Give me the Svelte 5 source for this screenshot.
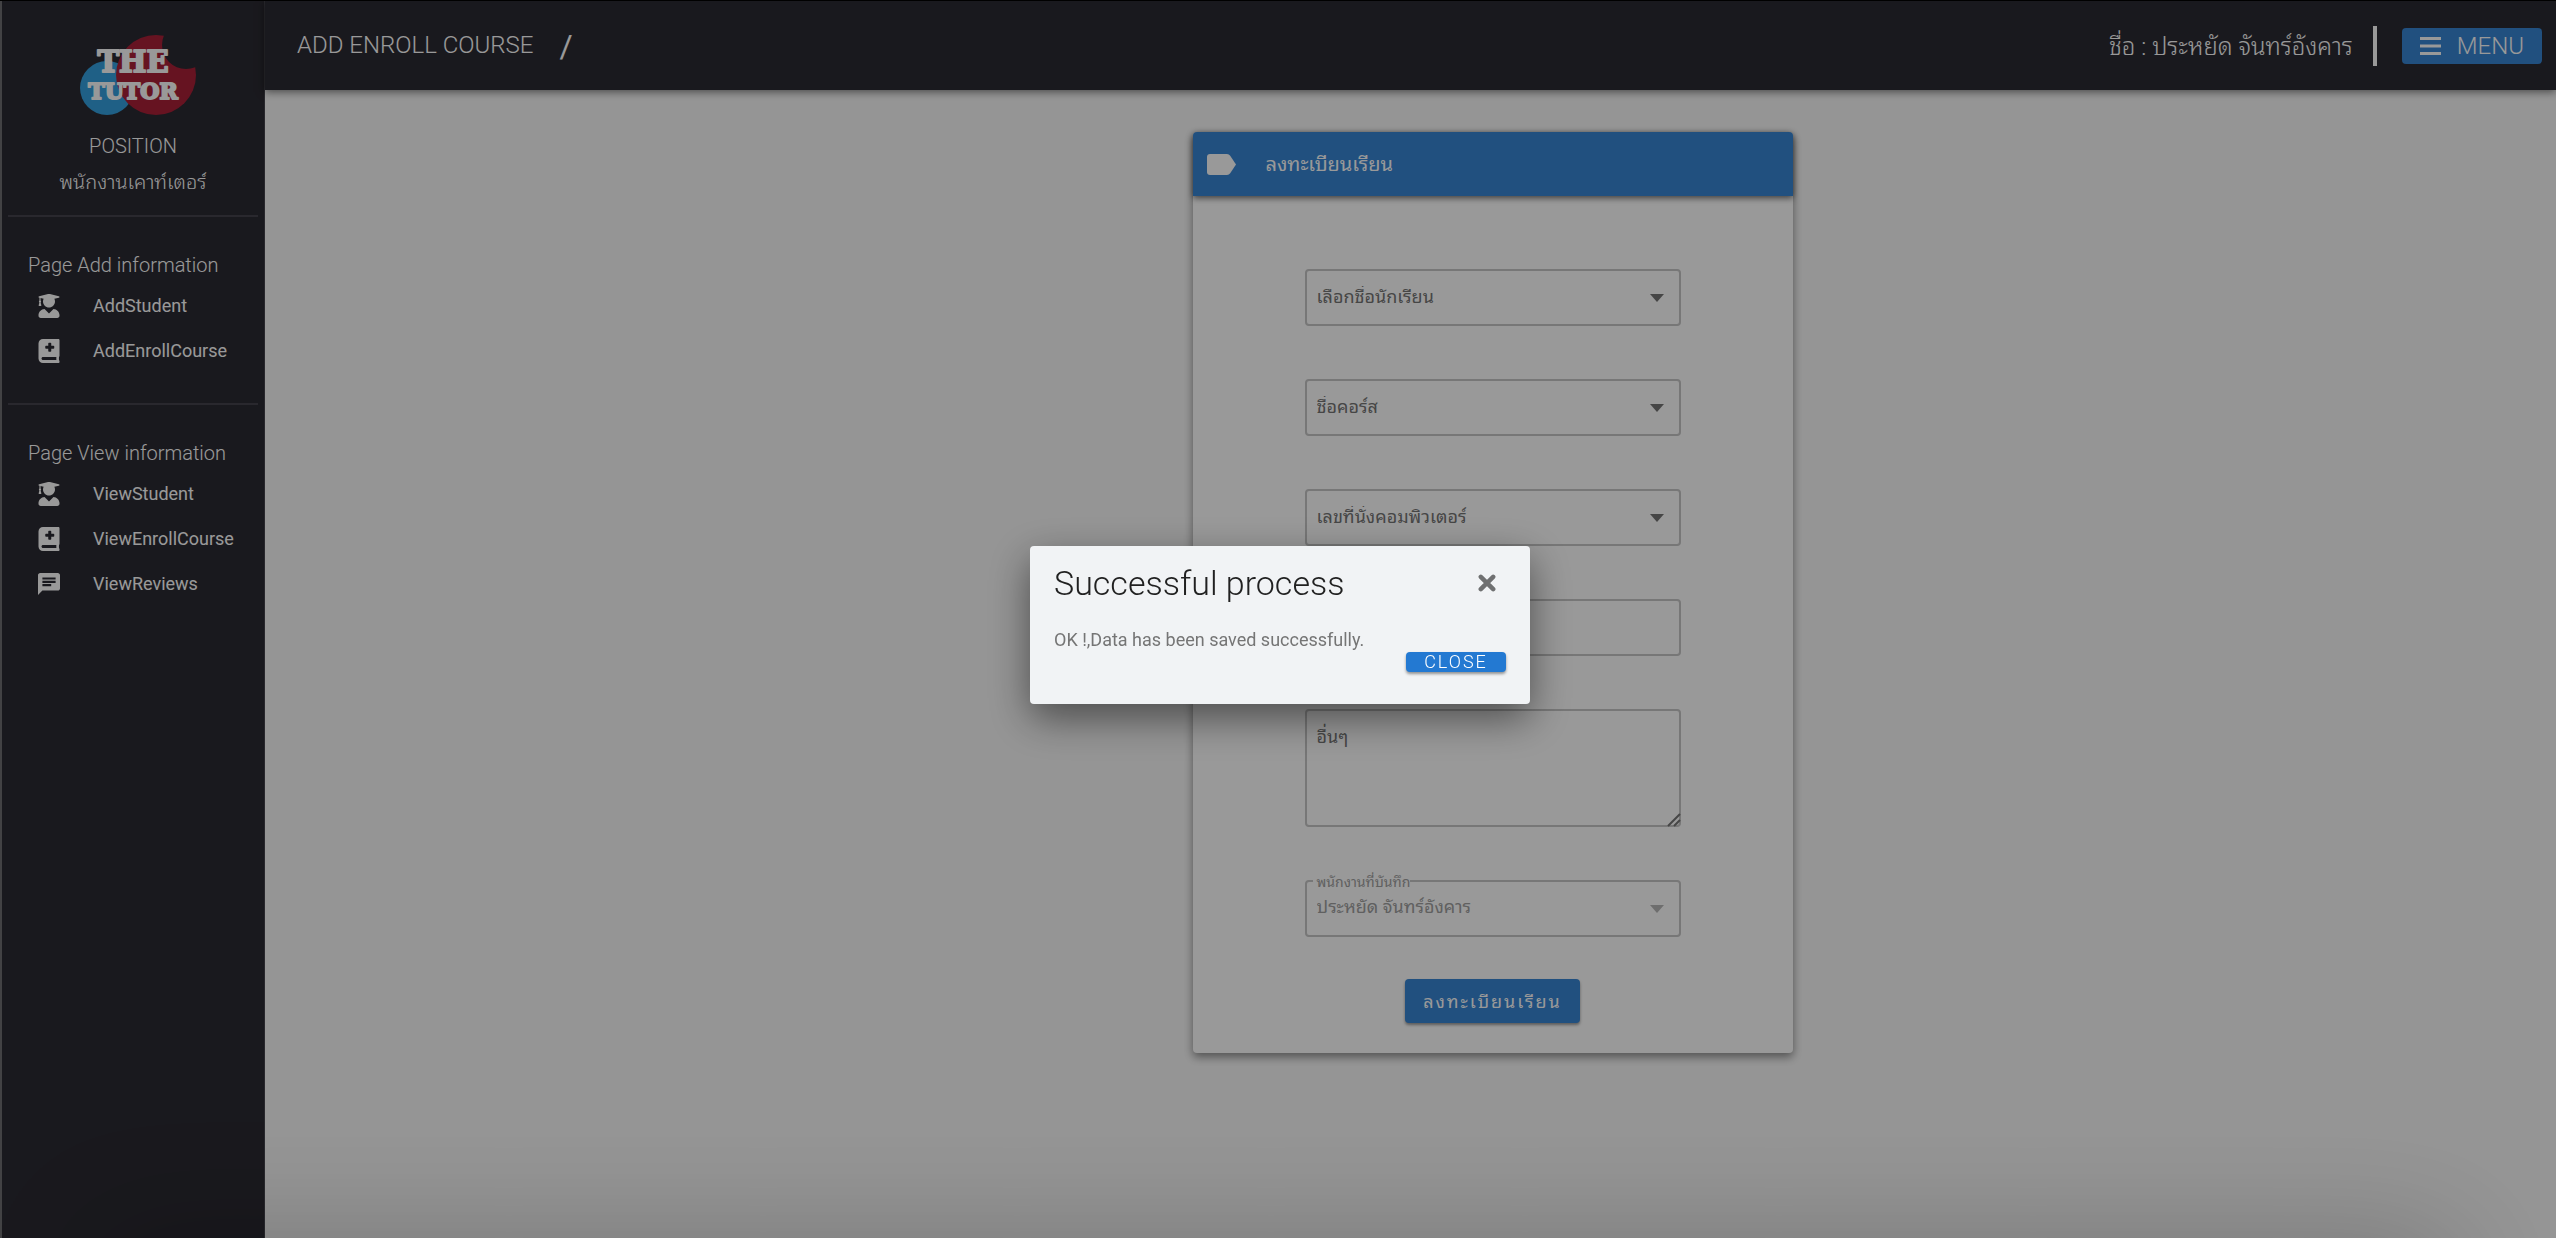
<script>
  const groups = [
    {
      title: 'Page Add information',
      items: [
        { label: 'AddStudent', icon: 'student' },
        { label: 'AddEnrollCourse', icon: 'book' }
      ]
    },
    {
      title: 'Page View information',
      items: [
        { label: 'ViewStudent', icon: 'student' },
        { label: 'ViewEnrollCourse', icon: 'book' },
        { label: 'ViewReviews', icon: 'chat' }
      ]
    }
  ];

  const selects = [
    { id: 'student', label: 'เลือกชื่อนักเรียน' },
    { id: 'course', label: 'ชื่อคอร์ส' },
    { id: 'seat', label: 'เลขที่นั่งคอมพิวเตอร์' }
  ];
</script>

<div class="app">
  <aside class="sidebar">
    <div class="profile">
      <svg class="logo" viewBox="0 0 116 80" role="img" aria-label="The Tutor">
        <defs>
          <mask id="bite">
            <rect width="116" height="80" fill="#fff" />
            <circle cx="106" cy="10" r="24" fill="#000" />
          </mask>
        </defs>
        <circle cx="27" cy="53" r="27" fill="#34a0df" />
        <circle cx="76" cy="40" r="40" fill="#aa2038" mask="url(#bite)" />
        <text x="53" y="37" text-anchor="middle" class="logo-top">THE</text>
        <text x="53" y="64" text-anchor="middle" class="logo-bottom">TUTOR</text>
      </svg>
      <div class="position">POSITION</div>
      <div class="role">พนักงานเคาท์เตอร์</div>
    </div>

    {#each groups as group}
      <nav class="group" aria-label={group.title}>
        <h2>{group.title}</h2>
        <ul>
          {#each group.items as item}
            <li>
              <a href="#{item.label}">
                {#if item.icon === 'student'}
                  <svg class="icon" viewBox="0 0 448 512" aria-hidden="true">
                    <path d="M319.4 320.6L224 416l-95.400-95.400C57.100 323.700 0 382.200 0 454.400v9.600c0 26.500 21.500 48 48 48h352c26.500 0 48-21.500 48-48v-9.600c0-72.200-57.100-130.700-128.600-133.800zM13.600 79.800l6.400 1.500v58.400c-7 4.200-12 11.500-12 20.300 0 8.400 4.600 15.400 11.100 19.700L3.500 242c-1.700 6.900 2.100 14 7.600 14h41.800c5.500 0 9.300-7.100 7.600-14l-15.600-62.300C51.400 175.400 56 168.400 56 160c0-8.800-5-16.100-12-20.300V87.100l66 15.900c-8.600 17.200-14 36.400-14 57 0 70.700 57.300 128 128 128s128-57.300 128-128c0-20.600-5.300-39.800-14-57l96.300-23.200c18.200-4.400 18.200-27.100 0-31.500l-190.400-46c-13-3.100-26.700-3.100-39.700 0L13.600 48.200c-18.100 4.400-18.100 27.200 0 31.600z" />
                  </svg>
                {:else if item.icon === 'book'}
                  <svg class="icon" viewBox="0 0 448 512" aria-hidden="true">
                    <path fill-rule="evenodd" d="M448 360V24c0-13.300-10.700-24-24-24H96C43 0 0 43 0 96v320c0 53 43 96 96 96h328c13.300 0 24-10.700 24-24v-16c0-7.500-3.500-14.300-8.900-18.700-4.200-15.400-4.200-59.300 0-74.700 5.400-4.300 8.900-11.100 8.900-18.600zM144 160q0-16 16-16h48V96q0-16 16-16h32q16 0 16 16v48h48q16 0 16 16v32q0 16-16 16h-48v48q0 16-16 16h-32q-16 0-16-16v-48h-48q-16 0-16-16zM381.400 448H96c-17.700 0-32-14.300-32-32s14.300-32 32-32h285.400c-1.900 17.100-1.900 46.900 0 64z" />
                  </svg>
                {:else}
                  <svg class="icon" viewBox="2 2 20 20" aria-hidden="true">
                    <path d="M20 2H4c-1.100 0-1.990.9-1.990 2L2 22l4-4h14c1.100 0 2-.9 2-2V4c0-1.100-.9-2-2-2zM6 9h12v2H6V9zm8 5H6v-2h8v2zm4-6H6V6h12v2z" />
                  </svg>
                {/if}
                <span>{item.label}</span>
              </a>
            </li>
          {/each}
        </ul>
      </nav>
    {/each}
  </aside>

  <div class="main">
    <header class="topbar">
      <h1>ADD ENROLL COURSE</h1>
      <span class="slash">/</span>
      <span class="user">ชื่อ : ประหยัด จันทร์อังคาร</span>
      <span class="bar"></span>
      <button class="menu" type="button">
        <svg viewBox="0 0 21 18" aria-hidden="true">
          <path d="M0 0h21v3H0zM0 7.500h21v3H0zM0 15h21v3H0z" />
        </svg>
        MENU
      </button>
    </header>

    <main>
      <form class="card">
        <div class="card-head">
          <svg viewBox="0 0 29 21" aria-hidden="true">
            <path d="M3 0H20Q22 0 23.200 1.700L29 10.500L23.200 19.300Q22 21 20 21H3Q0 21 0 18V3Q0 0 3 0Z" />
          </svg>
          <span>ลงทะเบียนเรียน</span>
        </div>
        <div class="fields">
          {#each selects as field}
            <div class="field">
              <select id={field.id} aria-label={field.label}>
                <option>{field.label}</option>
              </select>
              <svg class="caret" viewBox="0 0 14 8" aria-hidden="true"><path d="M0 0h14L7 8z" /></svg>
            </div>
          {/each}
          <div class="field">
            <input type="text" aria-label="จำนวน" />
          </div>
          <div class="field">
            <textarea aria-label="อื่นๆ" placeholder="อื่นๆ"></textarea>
            <svg class="grip" viewBox="0 0 14 14" aria-hidden="true"><path d="M1 13L13 1M7 13L13 7" /></svg>
          </div>
          <div class="field disabled">
            <label for="staff">พนักงานที่บันทึก</label>
            <select id="staff" disabled>
              <option>ประหยัด จันทร์อังคาร</option>
            </select>
            <svg class="caret" viewBox="0 0 14 8" aria-hidden="true"><path d="M0 0h14L7 8z" /></svg>
          </div>
        </div>
        <button class="submit" type="button">ลงทะเบียนเรียน</button>
      </form>
    </main>
  </div>
</div>

<div class="scrim">
  <div class="dialog" role="dialog" aria-modal="true" aria-labelledby="dialog-title">
    <div class="dialog-head">
      <h2 id="dialog-title">Successful process</h2>
      <button class="dismiss" type="button" aria-label="Dismiss">
        <svg viewBox="0 0 16 16" aria-hidden="true"><path d="M2.500 2.500l11 11M13.500 2.500l-11 11" /></svg>
      </button>
    </div>
    <p>OK !,Data has been saved successfully.</p>
    <button class="close" type="button">CLOSE</button>
  </div>
</div>

<style>
  :global(body) {
    margin: 0;
    background: #f9f9f9;
  }

  :global(*) {
    box-sizing: border-box;
  }

  .app,
  .scrim {
    font-family: Roboto, Thonburi, 'Noto Sans Thai Looped', Loma, Garuda, Waree, 'Noto Serif Thai', serif;
  }

  button,
  input,
  select,
  textarea {
    font: inherit;
  }

  h1,
  h2,
  p,
  ul {
    margin: 0;
    padding: 0;
    font-weight: 300;
  }

  .app {
    position: relative;
    display: flex;
    min-height: 100vh;
    overflow: hidden;
    border-top: 1px solid #000;
  }

  .app::after {
    content: '';
    position: absolute;
    top: 100%;
    right: 100px;
    left: 100px;
    height: 200px;
    box-shadow: 0 0 120px rgba(0, 0, 0, 0.2);
  }

  .sidebar {
    flex: none;
    width: 265px;
    padding: 0 6px;
    border-left: 2px solid #6e6e72;
    border-right: 1px solid #45444c;
    background: #2b2a32;
    color: #fff;
  }

  .profile {
    display: flex;
    flex-direction: column;
    align-items: center;
    height: 216px;
    padding: 34px 0 0;
    border-bottom: 2px solid #45444d;
  }

  .logo {
    width: 116px;
    height: 80px;
    margin-left: 10px;
    overflow: visible;
  }

  .logo text {
    fill: #fff;
    stroke: #fff;
    font-family: 'DejaVu Serif', serif;
    font-weight: 700;
    stroke-width: 2px;
    stroke-linejoin: round;
  }

  .logo-top {
    font-size: 29px;
  }

  .logo-bottom {
    font-size: 22px;
  }

  .position,
  .role {
    font-size: 20px;
    font-weight: 300;
    line-height: 30px;
  }

  .position {
    margin-top: 16px;
  }

  .role {
    margin-top: 6px;
  }

  .group {
    height: 188px;
    padding-top: 32px;
    border-bottom: 2px solid #45444d;
  }

  .group:last-child {
    height: auto;
    border-bottom: 0;
  }

  .group h2 {
    padding-left: 20px;
    font-size: 20px;
    line-height: 32px;
    white-space: nowrap;
  }

  .group ul {
    padding-top: 2px;
    list-style: none;
  }

  .group li a {
    display: flex;
    align-items: center;
    gap: 33px;
    height: 45px;
    padding-left: 30px;
    color: #fff;
    font-size: 18px;
    font-weight: 400;
    text-decoration: none;
  }

  .icon {
    flex: none;
    width: 22px;
    height: 24px;
    fill: #fff;
  }

  .main {
    display: flex;
    flex: 1;
    flex-direction: column;
    min-width: 0;
  }

  .topbar {
    display: flex;
    align-items: center;
    height: 89px;
    padding: 0 14px 0 32px;
    background: #2b2a32;
    box-shadow: 0 2px 8px rgba(0, 0, 0, 0.5);
    color: #fff;
    font-size: 24px;
    font-weight: 300;
  }

  .topbar h1 {
    padding-bottom: 2px;
    font-size: 24px;
  }

  .slash {
    margin-left: 26px;
    font-size: 32px;
    font-weight: 400;
  }

  .user {
    margin-left: auto;
    padding-bottom: 4px;
  }

  .bar {
    width: 4px;
    height: 40px;
    margin: 0 25px 0 20px;
    background: #fff;
  }

  .menu {
    display: flex;
    align-items: center;
    gap: 16px;
    height: 36px;
    padding: 0 18px;
    border: 0;
    border-radius: 4px;
    background: #3785d4;
    color: #fff;
    font-size: 24px;
  }

  .menu svg {
    width: 21px;
    height: 18px;
    fill: #fff;
  }

  main {
    display: flex;
    justify-content: center;
    padding: 42px 0 42px 164px;
  }

  .card {
    display: flex;
    flex-direction: column;
    align-items: center;
    width: 600px;
    padding-bottom: 30px;
    border-radius: 4px;
    background: #fff;
    box-shadow: 0 4px 10px rgba(0, 0, 0, 0.45);
  }

  .card-head {
    display: flex;
    align-self: stretch;
    align-items: center;
    gap: 30px;
    height: 64px;
    padding: 0 14px;
    border-radius: 4px 4px 0 0;
    background: #3785d4;
    box-shadow: 0 2px 6px rgba(0, 0, 0, 0.6);
    color: #fff;
    font-size: 20px;
  }

  .card-head span {
    padding-bottom: 4px;
  }

  .card-head svg {
    width: 29px;
    height: 21px;
    fill: #fff;
  }

  .fields {
    display: grid;
    gap: 53px;
    width: 376px;
    margin: 73px 0 42px;
  }

  .field {
    position: relative;
    display: flex;
  }

  .field select,
  .field input,
  .field textarea {
    width: 100%;
    height: 57px;
    margin: 0;
    padding: 0 10px 2px;
    border: 2px solid #c6c6c6;
    border-radius: 4px;
    outline: 0;
    appearance: none;
    background: transparent;
    color: #757575;
    font-size: 18px;
    opacity: 1;
  }

  .field textarea {
    height: 118px;
    padding-top: 12px;
    line-height: 28px;
    resize: both;
  }

  .field textarea::-webkit-resizer {
    display: none;
  }

  .field textarea::placeholder {
    color: #757575;
  }

  .grip {
    position: absolute;
    right: 0;
    bottom: 0;
    width: 14px;
    height: 14px;
    fill: none;
    stroke: #757575;
    stroke-width: 2;
    pointer-events: none;
  }

  .caret {
    position: absolute;
    top: 25px;
    right: 17px;
    width: 14px;
    height: 8px;
    fill: #757575;
    pointer-events: none;
  }

  .field.disabled select {
    padding-bottom: 4px;
    color: #a0a0a0;
  }

  .disabled .caret {
    fill: #b8b8b8;
  }

  .disabled label {
    position: absolute;
    top: -6px;
    left: 8px;
    padding-left: 4px;
    background: #fff;
    color: #a0a0a0;
    font-size: 14px;
    line-height: 16px;
  }

  .submit {
    height: 44px;
    padding: 0 18px 2px;
    border: 0;
    border-radius: 4px;
    background: #3785d4;
    box-shadow: 0 2px 3px rgba(0, 0, 0, 0.4);
    color: #fff;
    font-size: 18px;
    letter-spacing: 2px;
  }

  .scrim {
    position: fixed;
    inset: 0;
    display: flex;
    align-items: center;
    justify-content: center;
    padding-top: 12px;
    background: rgba(0, 0, 0, 0.4);
  }

  .dialog {
    display: flex;
    flex-direction: column;
    width: 500px;
    margin-left: 4px;
    padding: 12px 24px 32px;
    border-radius: 4px;
    background: #f1f3f5;
    box-shadow: 0 14px 40px rgba(0, 0, 0, 0.5);
  }

  .dialog-head {
    display: flex;
    align-items: center;
    justify-content: space-between;
    height: 50px;
  }

  .dialog h2 {
    color: #212121;
    font-size: 34px;
  }

  .dismiss {
    display: flex;
    margin-right: 10px;
    padding: 0;
    border: 0;
    background: transparent;
  }

  .dismiss svg {
    width: 18px;
    height: 18px;
    fill: none;
    stroke: #6f7071;
    stroke-linecap: round;
    stroke-width: 4;
  }

  .dialog p {
    margin-top: 20px;
    color: #757575;
    font-size: 18px;
    font-weight: 400;
    line-height: 24px;
  }

  .close {
    align-self: flex-end;
    width: 100px;
    height: 20px;
    padding: 0;
    border: 0;
    border-radius: 4px;
    background: #2379d2;
    box-shadow: 0 2px 3px rgba(0, 0, 0, 0.4);
    color: #fff;
    font-size: 18px;
    font-weight: 300;
    letter-spacing: 2px;
    line-height: 20px;
  }
</style>
